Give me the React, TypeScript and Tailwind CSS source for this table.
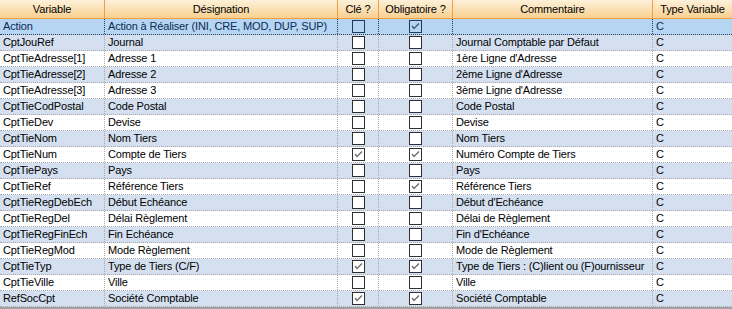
type Row = {
  variable: string;
  designation: string;
  cle: boolean;
  oblig: boolean;
  commentaire: string;
  type: string;
};

const rows: Row[] = [
  { variable: "Action", designation: "Action à Réaliser (INI, CRE, MOD, DUP, SUP)", cle: false, oblig: true, commentaire: "", type: "C" },
  { variable: "CptJouRef", designation: "Journal", cle: false, oblig: false, commentaire: "Journal Comptable par Défaut", type: "C" },
  { variable: "CptTieAdresse[1]", designation: "Adresse 1", cle: false, oblig: false, commentaire: "1ère Ligne d'Adresse", type: "C" },
  { variable: "CptTieAdresse[2]", designation: "Adresse 2", cle: false, oblig: false, commentaire: "2ème Ligne d'Adresse", type: "C" },
  { variable: "CptTieAdresse[3]", designation: "Adresse 3", cle: false, oblig: false, commentaire: "3ème Ligne d'Adresse", type: "C" },
  { variable: "CptTieCodPostal", designation: "Code Postal", cle: false, oblig: false, commentaire: "Code Postal", type: "C" },
  { variable: "CptTieDev", designation: "Devise", cle: false, oblig: false, commentaire: "Devise", type: "C" },
  { variable: "CptTieNom", designation: "Nom Tiers", cle: false, oblig: false, commentaire: "Nom Tiers", type: "C" },
  { variable: "CptTieNum", designation: "Compte de Tiers", cle: true, oblig: true, commentaire: "Numéro Compte de Tiers", type: "C" },
  { variable: "CptTiePays", designation: "Pays", cle: false, oblig: false, commentaire: "Pays", type: "C" },
  { variable: "CptTieRef", designation: "Référence Tiers", cle: false, oblig: true, commentaire: "Référence Tiers", type: "C" },
  { variable: "CptTieRegDebEch", designation: "Début Echéance", cle: false, oblig: false, commentaire: "Début d'Echéance", type: "C" },
  { variable: "CptTieRegDel", designation: "Délai Règlement", cle: false, oblig: false, commentaire: "Délai de Règlement", type: "C" },
  { variable: "CptTieRegFinEch", designation: "Fin Echéance", cle: false, oblig: false, commentaire: "Fin d'Echéance", type: "C" },
  { variable: "CptTieRegMod", designation: "Mode Règlement", cle: false, oblig: false, commentaire: "Mode de Règlement", type: "C" },
  { variable: "CptTieTyp", designation: "Type de Tiers (C/F)", cle: true, oblig: true, commentaire: "Type de Tiers : (C)lient ou (F)ournisseur", type: "C" },
  { variable: "CptTieVille", designation: "Ville", cle: false, oblig: false, commentaire: "Ville", type: "C" },
  { variable: "RefSocCpt", designation: "Société Comptable", cle: true, oblig: true, commentaire: "Société Comptable", type: "C" },
];

const cols = "grid grid-cols-[105px_233px_41px_74px_200px_79px]";

function Check({ on, selected }: { on: boolean; selected: boolean }) {
  return (
    <div
      className={
        "w-[13px] h-[13px] border " +
        (selected ? "border-[#1e3a5c] bg-transparent" : "border-[#2f2f2f] bg-white")
      }
    >
      {on && (
        <svg width="11" height="11" viewBox="0 0 11 11">
          <polyline points="2,5 4,7.5 9,2.5" fill="none" stroke={selected ? "#3b5878" : "#6b6b6b"} strokeWidth="1.3" />
        </svg>
      )}
    </div>
  );
}

function Header() {
  const h = "flex items-center justify-center border-r border-[#f0a040] h-[18px]";
  return (
    <div className={cols + " bg-gradient-to-b from-[#fdf1da] to-[#f8d08f] border-b border-[#f0a040]"}>
      <div className={h}>Variable</div>
      <div className={h}>Désignation</div>
      <div className={h}>Clé ?</div>
      <div className={h}>Obligatoire ?</div>
      <div className={h}>Commentaire</div>
      <div className="flex items-center justify-center h-[18px]">Type Variable</div>
    </div>
  );
}

export default function App() {
  return (
    <div
      className="w-[732px] h-[309px] bg-white text-[11px] tracking-[-0.15px] text-black overflow-hidden"
      style={{ fontFamily: '"Liberation Sans", Arial, sans-serif' }}
    >
      <Header />
      {rows.map((r, i) => {
        const selected = i === 0;
        const bg = selected ? "bg-[#b5d5f2] text-[#0b2a55]" : i % 2 === 1 ? "bg-[#d4e0f0]" : "bg-white";
        const line = selected ? "border-[#2a3a50]" : "border-[#a8a8a8]";
        const cell = "h-[15px] flex items-center border-r border-dotted " + line;
        return (
          <div key={r.variable} className={cols + " border-b border-dotted " + line + " " + bg}>
            <div className={cell + " pl-[3px] whitespace-nowrap"}>{r.variable}</div>
            <div className={cell + " pl-[3px] whitespace-nowrap"}>{r.designation}</div>
            <div className={cell + " justify-center"}>
              <Check on={r.cle} selected={selected} />
            </div>
            <div className={cell + " justify-center"}>
              <Check on={r.oblig} selected={selected} />
            </div>
            <div className={cell + " pl-[3px] whitespace-nowrap"}>{r.commentaire}</div>
            <div className="h-[15px] flex items-center pl-[3px]">{r.type}</div>
          </div>
        );
      })}
      <div className="h-[3px] bg-[#a0a0a0]" />
    </div>
  );
}
